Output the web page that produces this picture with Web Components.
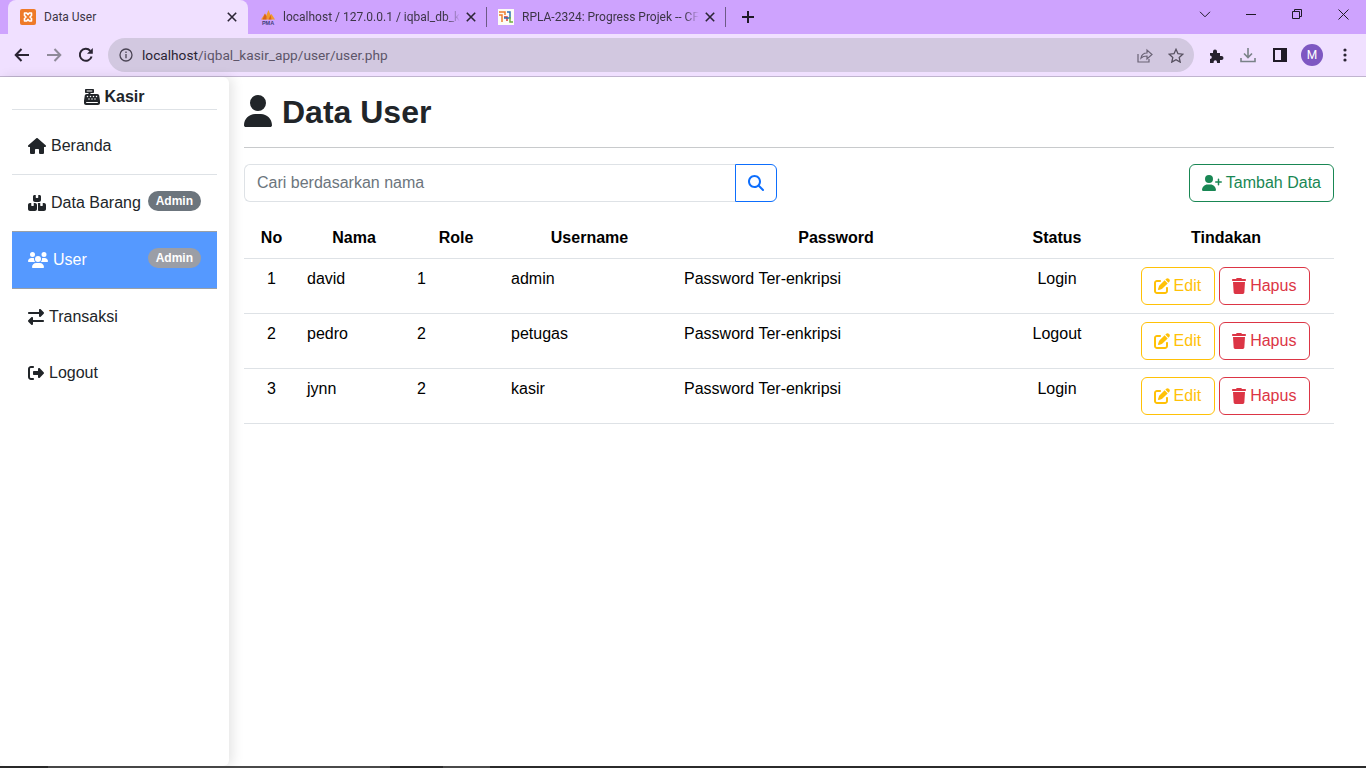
<!DOCTYPE html>
<html lang="id">
<head>
<meta charset="utf-8">
<title>Data User</title>
<style>
  html, body { margin: 0; height: 768px; overflow: hidden; background: #fff; }
  body { display: flex; flex-direction: column; font-family: "Liberation Sans", Arial, sans-serif; font-size: 16px; color: #212529; }
</style>
</head>
<body>
  <browser-chrome url-host="localhost" url-path="/iqbal_kasir_app/user/user.php"></browser-chrome>
  <app-shell>
    <app-sidebar slot="side">
      <side-link icon="home" vb="576" style="margin-top:7px">Beranda</side-link>
      <side-rule></side-rule>
      <side-link icon="boxes" vb="576" badge="Admin" style="height:56px">Data Barang</side-link>
      <side-link icon="users" vb="640" badge="Admin" active>User</side-link>
      <side-link icon="exchange" vb="512" style="padding-bottom:2px">Transaksi</side-link>
      <side-link icon="logout" vb="512" style="height:56px;padding-bottom:2px">Logout</side-link>
    </app-sidebar>
    <page-title>Data User</page-title>
    <tool-row></tool-row>
    <user-table></user-table>
  </app-shell>
  <task-strip></task-strip>

<script>
  // ---- font awesome style icon paths ----
  const ICONS = {
    home: "M575.8 255.5c0 18-15 32.100-32 32.100h-32l.7 160.200c0 2.700-.2 5.400-.5 8.100V472c0 22.100-17.900 40-40 40H456c-1.100 0-2.200 0-3.300-.1c-1.400 .1-2.800 .1-4.200 .1H416 392c-22.100 0-40-17.900-40-40V448 384c0-17.700-14.300-32-32-32H256c-17.700 0-32 14.300-32 32v64 24c0 22.100-17.900 40-40 40H160 128.100c-1.500 0-3-.1-4.500-.2c-1.200 .1-2.400 .2-3.600 .2H104c-22.100 0-40-17.900-40-40V360c0-.9 0-1.900 .1-2.800V287.600H32c-18 0-32-14-32-32.100c0-9 3-17 10-24L266.400 8c7-7 15-8 22-8s15 2 21 7L564.800 231.500c8 7 12 15 11 24z",
    boxes: "M248 0H208c-26.500 0-48 21.500-48 48V160c0 35.300 28.700 64 64 64H352c35.300 0 64-28.700 64-64V48c0-26.500-21.500-48-48-48H328V80c0 8.800-7.200 16-16 16H264c-8.800 0-16-7.200-16-16V0zM64 256c-35.300 0-64 28.700-64 64V448c0 35.300 28.700 64 64 64H224c35.300 0 64-28.700 64-64V320c0-35.300-28.700-64-64-64H184v80c0 8.800-7.200 16-16 16H120c-8.800 0-16-7.200-16-16V256H64zM352 512H512c35.300 0 64-28.700 64-64V320c0-35.300-28.700-64-64-64H472v80c0 8.800-7.200 16-16 16H408c-8.800 0-16-7.200-16-16V256H352c-15 0-28.800 5.100-39.700 13.800c4.900 10.400 7.700 22 7.700 34.200V464c0 12.200-2.800 23.800-7.700 34.200C323.200 506.900 337 512 352 512z",
    users: "M144 0a80 80 0 1 1 0 160A80 80 0 1 1 144 0zM512 0a80 80 0 1 1 0 160A80 80 0 1 1 512 0zM0 298.700C0 239.800 47.800 192 106.700 192h42.700c15.900 0 31 3.500 44.600 9.700c-1.300 7.200-1.900 14.700-1.900 22.300c0 38.200 16.800 72.500 43.300 96c-.2 0-.4 0-.7 0H21.300C9.600 320 0 310.400 0 298.700zM405.300 320c-.2 0-.4 0-.7 0c26.600-23.500 43.300-57.800 43.300-96c0-7.600-.7-15-1.900-22.300c13.600-6.300 28.700-9.700 44.600-9.700h42.700C592.200 192 640 239.800 640 298.700c0 11.800-9.600 21.300-21.300 21.300H405.300zM224 224a96 96 0 1 1 192 0 96 96 0 1 1 -192 0zM128 485.300C128 411.700 187.700 352 261.300 352H378.700C452.300 352 512 411.700 512 485.300c0 14.700-11.900 26.700-26.700 26.700H154.700c-14.700 0-26.700-11.900-26.700-26.700z",
    exchange: "M32 96l320 0V32c0-12.900 7.800-24.600 19.800-29.600s25.700-2.200 34.900 6.900l96 96c6 6 9.400 14.100 9.400 22.600s-3.400 16.600-9.400 22.600l-96 96c-9.200 9.200-22.900 11.900-34.900 6.900s-19.800-16.600-19.800-29.600V160L32 160c-17.700 0-32-14.300-32-32s14.300-32 32-32zM480 352c17.700 0 32 14.300 32 32s-14.300 32-32 32H160v64c0 12.900-7.800 24.600-19.800 29.600s-25.700 2.200-34.900-6.900l-96-96c-6-6-9.400-14.100-9.400-22.600s3.400-16.600 9.400-22.600l96-96c9.200-9.200 22.900-11.900 34.900-6.900s19.800 16.600 19.800 29.600l0 64H480z",
    logout: "M377.900 105.900L500.700 228.700c7.200 7.200 11.300 17.100 11.300 27.300s-4.100 20.100-11.300 27.300L377.900 406.100c-6.400 6.400-15 9.900-24 9.900c-18.700 0-33.900-15.200-33.900-33.900l0-62.100-128 0c-17.700 0-32-14.300-32-32l0-64c0-17.700 14.300-32 32-32l128 0 0-62.100c0-18.700 15.200-33.900 33.900-33.900c9 0 17.600 3.600 24 9.900zM160 96L96 96c-17.700 0-32 14.300-32 32l0 256c0 17.700 14.300 32 32 32l64 0c17.700 0 32 14.300 32 32s-14.300 32-32 32l-64 0c-53 0-96-43-96-96L0 128C0 75 43 32 96 32l64 0c17.700 0 32 14.300 32 32s-14.300 32-32 32z",
    register: "M64 0C46.300 0 32 14.300 32 32V96c0 17.700 14.300 32 32 32h80v32H87c-31.600 0-58.500 23.100-63.300 54.400L1.100 364.100C.4 368.800 0 373.600 0 378.400V448c0 35.300 28.700 64 64 64H448c35.300 0 64-28.700 64-64V378.400c0-4.800-.4-9.600-1.100-14.400L488.200 214.400C483.500 183.100 456.600 160 425 160H208V128h80c17.700 0 32-14.300 32-32V32c0-17.700-14.300-32-32-32H64zM96 48H256c8.800 0 16 7.200 16 16s-7.200 16-16 16H96c-8.800 0-16-7.200-16-16s7.200-16 16-16zM64 432c0-8.800 7.200-16 16-16H432c8.800 0 16 7.200 16 16s-7.200 16-16 16H80c-8.800 0-16-7.200-16-16zm48-168a24 24 0 1 1 0-48 24 24 0 1 1 0 48zm120-24a24 24 0 1 1 -48 0 24 24 0 1 1 48 0zM160 344a24 24 0 1 1 0-48 24 24 0 1 1 0 48zM328 240a24 24 0 1 1 -48 0 24 24 0 1 1 48 0zM256 344a24 24 0 1 1 0-48 24 24 0 1 1 0 48zM424 240a24 24 0 1 1 -48 0 24 24 0 1 1 48 0zM352 344a24 24 0 1 1 0-48 24 24 0 1 1 0 48z",
    user: "M224 256A128 128 0 1 0 224 0a128 128 0 1 0 0 256zm-45.700 48C79.800 304 0 383.800 0 482.300C0 498.700 13.300 512 29.700 512H418.300c16.400 0 29.700-13.300 29.700-29.700C448 383.800 368.200 304 269.700 304H178.300z",
    userplus: "M96 128a128 128 0 1 1 256 0A128 128 0 1 1 96 128zM0 482.300C0 383.800 79.800 304 178.300 304h91.400C368.200 304 448 383.800 448 482.300c0 16.400-13.300 29.700-29.700 29.700H29.700C13.300 512 0 498.700 0 482.300zM504 312V248H440c-13.300 0-24-10.700-24-24s10.700-24 24-24h64V136c0-13.300 10.700-24 24-24s24 10.700 24 24v64h64c13.300 0 24 10.700 24 24s-10.700 24-24 24H552v64c0 13.300-10.700 24-24 24s-24-10.700-24-24z",
    search: "M416 208c0 45.900-14.900 88.300-40 122.700L502.600 457.400c12.500 12.500 12.500 32.800 0 45.300s-32.800 12.500-45.300 0L330.700 376c-34.400 25.200-76.800 40-122.700 40C93.100 416 0 322.900 0 208S93.100 0 208 0S416 93.100 416 208zM208 352a144 144 0 1 0 0-288 144 144 0 1 0 0 288z",
    trash: "M135.200 17.700L128 32H32C14.300 32 0 46.300 0 64S14.300 96 32 96H416c17.700 0 32-14.300 32-32s-14.300-32-32-32H320l-7.200-14.300C307.400 6.800 296.300 0 284.200 0H163.800c-12.100 0-23.200 6.800-28.600 17.700zM416 128H32L53.200 467c1.600 25.300 22.600 45 47.900 45H346.900c25.300 0 46.300-19.700 47.900-45L416 128z",
    edit: "M471.600 21.700c-21.900-21.900-57.300-21.900-79.200 0L362.300 51.700l97.900 97.900 30.100-30.100c21.900-21.900 21.900-57.300 0-79.200L471.600 21.700zm-299.200 220c-6.100 6.100-10.800 13.600-13.500 21.900l-29.600 88.800c-2.900 8.600-.6 18.100 5.800 24.600s15.900 8.700 24.600 5.800l88.800-29.600c8.200-2.700 15.700-7.400 21.900-13.500L437.700 172.300 339.700 74.300 172.400 241.700zM96 64C43 64 0 107 0 160V416c0 53 43 96 96 96H352c53 0 96-43 96-96V320c0-17.700-14.300-32-32-32s-32 14.300-32 32v96c0 17.700-14.300 32-32 32H96c-17.700 0-32-14.300-32-32V160c0-17.700 14.300-32 32-32h96c17.700 0 32-14.300 32-32s-14.300-32-32-32H96z"
  };
  const fa = (name, w, h, vb = 512) => `<svg width="${w}" height="${h}" viewBox="0 0 ${vb} 512" fill="currentColor" style="display:block;flex:none"><path d="${ICONS[name]}"/></svg>`;

  class BrowserChrome extends HTMLElement {
    constructor() { super(); this.attachShadow({ mode: "open" }); }
    connectedCallback() {
      const host = this.getAttribute("url-host"), path = this.getAttribute("url-path");
      const closeX = `<svg class="x" width="10" height="10" viewBox="0 0 10 10" stroke="#2b2535" stroke-width="1.6" fill="none"><path d="M.8.8l8.4 8.4M9.2.8L.8 9.2"/></svg>`;
      this.shadowRoot.innerHTML = `
        <style>
          :host{display:block;flex:none;height:77px;font-family:Roboto,"Noto Sans",sans-serif;font-size:12px;color:#3c3546}
          .strip{height:34px;background:#cea3fe;display:flex;align-items:flex-start;padding-left:8px}
          .tab{height:34px;display:flex;align-items:center;flex:none;box-sizing:border-box}
          .tab.on{background:#f0e0ff;border-radius:8px 8px 0 0}
          .title{flex:none;white-space:nowrap;margin-left:8px;font-size:12px;-webkit-mask-image:linear-gradient(90deg,#000 92%,transparent)}
          .tab.on .title{-webkit-mask-image:none}
          .x{flex:none;margin-left:auto}
          .sep{width:1px;height:20px;background:#6d5a86;flex:none;margin-top:7px}
          .plus{flex:none;margin:10px 0 0 15px}
          .win{margin-left:auto;display:flex;align-items:flex-start;height:34px}
          .win svg{display:block}
          .win span{width:46px;height:28px;display:flex;align-items:center;justify-content:center}
          .bar{height:42px;background:#f0e0ff;border-bottom:1px solid #c0b4cf;display:flex;align-items:center;padding-left:14px}
          .nav{width:32px;flex:none;display:flex}
          .omni{flex:none;width:1086px;height:34px;border-radius:17px;background:#d2c8e0;display:flex;align-items:center;box-sizing:border-box;padding-left:11px;font-size:13.7px;color:#5d5569}
          .omni b{font-weight:400;color:#2a2433}
          .omni .u{margin-left:9px;flex:1}
          .omni svg{display:block;flex:none}
          .tools{display:flex;align-items:center;flex:none}
          .tools span{display:flex;width:32px;justify-content:center;flex:none}
          .tools div{width:22px;height:22px;border-radius:50%;background:#7e57c2;color:#fff;font-size:12px;display:flex;align-items:center;justify-content:center}
        </style>
        <div class="strip">
          <div class="tab on" style="width:240px;padding:0 11px 0 12px">
            <svg width="16" height="16" viewBox="0 0 16 16" style="flex:none;display:block"><rect width="16" height="16" rx="2" fill="#ee7a28"/><path d="M4.500 4h2.200L8 5.600 9.300 4h2.200v2.500L10 8l1.500 1.500V12H9.300L8 10.400 6.700 12H4.500V9.500L6 8 4.500 6.500z" fill="none" stroke="#fff" stroke-width="1.600" stroke-linejoin="round"/></svg>
            <span class="title">Data User</span>${closeX}
          </div>
          <div class="tab" style="width:238px;padding:0 10px 0 12px">
            <svg width="16" height="16" viewBox="0 0 16 16" style="flex:none;display:block"><path d="M1 10.500L5 4.500l1 2.500 2.500-6 2 5 1-1 3.500 5.500z" fill="#f29a2e"/><path d="M5 4.500l1.500 3v3H2.500zM10.500 6l1 4.500H8.500z" fill="#d9641c"/><text x="8" y="15.500" font-family="Liberation Sans" font-size="5.500" font-weight="700" text-anchor="middle" fill="#3d3d7a">PMA</text></svg>
            <span class="title" style="margin-left:7px">localhost / 127.0.0.1 / iqbal_db_k</span>${closeX}
          </div>
          <div class="sep"></div>
          <div class="tab" style="width:238px;padding:0 10px 0 11px">
            <svg width="16" height="16" viewBox="0 0 16 16" style="flex:none;display:block"><rect width="16" height="16" fill="#fdfcf5"/><path d="M1 3h6v3M1 6h3v7" fill="none" stroke="#ee7f2e" stroke-width="1.500"/><path d="M6 8h3v4" fill="none" stroke="#d8342f" stroke-width="1.500"/><path d="M9 3h3v6H6" fill="none" stroke="#2f6fb4" stroke-width="1.500"/><path d="M12 8v5h3" fill="none" stroke="#6fae3e" stroke-width="1.500"/></svg>
            <span class="title">RPLA-2324: Progress Projek -- CF</span>${closeX}
          </div>
          <div class="sep"></div>
          <svg class="plus" width="14" height="14" viewBox="0 0 14 14" stroke="#1f1a26" stroke-width="2" fill="none"><path d="M7 1v12M1 7h12"/></svg>
          <div class="win">
            <span><svg width="12" height="7" viewBox="0 0 12 7" fill="none" stroke="#1f1a26"><path d="M1 .8l5 5 5-5"/></svg></span>
            <span><svg width="10" height="1" viewBox="0 0 10 1"><path d="M0 .5h10" stroke="#1f1a26"/></svg></span>
            <span><svg width="10" height="10" viewBox="0 0 10 10" fill="none" stroke="#1f1a26"><path d="M.5 2.500h7v7h-7zM2.500 2.500v-2h7v7h-2"/></svg></span>
            <span><svg width="11" height="11" viewBox="0 0 11 11" fill="none" stroke="#1f1a26"><path d="M.5.5l10 10M10.500.5l-10 10"/></svg></span>
          </div>
        </div>
        <div class="bar">
          <div class="nav"><svg width="16" height="14" viewBox="0 0 16 14" fill="none" stroke="#2a2433" stroke-width="2"><path d="M15 7H2M7.500 1L1.700 7l5.800 6"/></svg></div>
          <div class="nav"><svg width="16" height="14" viewBox="0 0 16 14" fill="none" stroke="#8f8a99" stroke-width="2"><path d="M1 7h13M8.500 1l5.800 6-5.800 6"/></svg></div>
          <div class="nav" style="width:30px"><svg width="16" height="16" viewBox="0 0 16 16" fill="none" stroke="#2a2433" stroke-width="2"><path d="M13.600 9.500A6 6 0 1 1 12.300 3.800"/><path d="M14.800 1v5.800H9z" fill="#2a2433" stroke="none"/></svg></div>
          <div class="omni">
            <svg width="14" height="14" viewBox="0 0 14 14" fill="none" stroke="#4a4454" stroke-width="1.300"><circle cx="7" cy="7" r="6"/><path d="M7 6v4.200M7 3.500v1.400"/></svg>
            <span class="u"><b>${host}</b>${path}</span>
            <svg width="16" height="15" viewBox="0 0 16 15" fill="none" stroke="#6a6375" stroke-width="1.200"><path d="M1 6v8h11v-3"/><path d="M4 10c.5-3 3-5 6-5V2l5 4.500-5 4.500V8c-2.500 0-4.500.5-6 2z"/></svg>
            <svg style="margin:0 10px 0 15px" width="16" height="15" viewBox="0 0 16 15" fill="none" stroke="#56505f" stroke-width="1.300"><path d="M8 1.300l2 4.400 4.800.5-3.600 3.200 1 4.700L8 11.700l-4.200 2.400 1-4.700L1.200 6.200 6 5.700z"/></svg>
          </div>
          <div class="tools" style="margin-left:6px">
            <span><svg width="15" height="15" viewBox="0 0 15 15" fill="#26212d"><path d="M1 5h3V3.500a2 2 0 0 1 4 0V5h3v3h1.500a2 2 0 0 1 0 4H11v3H8v-1a1.700 1.700 0 0 0-3.400 0v1H1v-4a1.800 1.800 0 0 0 0-3.600z"/></svg></span>
            <span><svg width="16" height="16" viewBox="0 0 16 16" fill="none" stroke="#7a8288" stroke-width="1.600"><path d="M8 1v9M4 6.500L8 10.500l4-4M1 11v3.500h14V11"/></svg></span>
            <span><svg width="14" height="14" viewBox="0 0 14 14"><path d="M0 0h14v14H0z" fill="#1f1a26"/><path d="M2 2h6v10H2z" fill="#f0e0ff"/></svg></span>
            <span><div>M</div></span>
            <span style="width:34px"><svg width="4" height="14" viewBox="0 0 4 14" fill="#2a2433"><circle cx="2" cy="2" r="1.600"/><circle cx="2" cy="7" r="1.600"/><circle cx="2" cy="12" r="1.600"/></svg></span>
          </div>
        </div>`;
    }
  }

  class AppShell extends HTMLElement {
    constructor() {
      super(); this.attachShadow({ mode: "open" });
      this.shadowRoot.innerHTML = `
        <style>
          :host{display:flex;flex:1;min-height:0;background:#fff}
          main{flex:1;min-width:0;padding:0 32px 0 15px}
        </style>
        <slot name="side"></slot>
        <main><slot></slot></main>`;
    }
  }

  class AppSidebar extends HTMLElement {
    constructor() {
      super(); this.attachShadow({ mode: "open" });
      this.shadowRoot.innerHTML = `
        <style>
          :host{display:block;flex:none;box-sizing:border-box;width:229px;padding:0 12px;background:#fff;border-radius:0 6px 6px 6px;box-shadow:4px 0 12px rgba(0,0,0,.1);position:relative}
          .head{height:33px;box-sizing:border-box;padding-top:8px;border-bottom:1px solid #dee2e6;display:flex;align-items:center;justify-content:center;gap:4px;font-weight:700;color:#212529}
        </style>
        <div class="head">${fa("register", 16, 16)}<span>Kasir</span></div>
        <slot></slot>`;
    }
  }

  class SideLink extends HTMLElement {
    constructor() { super(); this.attachShadow({ mode: "open" }); }
    connectedCallback() {
      const badge = this.getAttribute("badge");
      const vb = +this.getAttribute("vb");
      const w = Math.round(16 * vb / 512 * 100) / 100;
      this.shadowRoot.innerHTML = `
        <style>
          :host{display:flex;align-items:center;box-sizing:border-box;height:57px;padding:0 16px;color:#212529}
          :host([active]){height:58px;background:#5599ff;color:#fff;border-top:1px solid #9aa0a6;border-bottom:1px solid #9aa0a6}
          .ic{margin-right:5px}
          .b{margin:-4px 0 0 auto;background:#6c757d;color:#fff;font-size:12px;font-weight:700;line-height:12px;padding:4px 8px;border-radius:10px}
          :host([active]) .b{background:#9b9ea6}
        </style>
        <span class="ic">${fa(this.getAttribute("icon"), w, 16, vb)}</span>
        <span><slot></slot></span>
        ${badge ? `<span class="b">${badge}</span>` : ""}`;
    }
  }

  class SideRule extends HTMLElement {
    constructor() {
      super(); this.attachShadow({ mode: "open" });
      this.shadowRoot.innerHTML = `<style>:host{display:block;height:1px;background:#dee2e6}</style>`;
    }
  }

  class PageTitle extends HTMLElement {
    constructor() {
      super(); this.attachShadow({ mode: "open" });
      this.shadowRoot.innerHTML = `
        <style>
          :host{display:flex;align-items:center;gap:10px;box-sizing:border-box;height:71px;padding-bottom:2px;border-bottom:1px solid #c8cacc;font-size:32px;font-weight:700;color:#212529}
          span{margin-top:2px}
        </style>
        ${fa("user", 28, 32, 448)}<span><slot></slot></span>`;
    }
  }

  class ToolRow extends HTMLElement {
    constructor() {
      super(); this.attachShadow({ mode: "open" });
      this.shadowRoot.innerHTML = `
        <style>
          :host{display:flex;justify-content:space-between;margin-top:16px}
          form{display:flex;width:533px;margin:0}
          input{flex:1;min-width:0;height:38px;box-sizing:border-box;border:1px solid #dee2e6;border-right:0;border-radius:6px 0 0 6px;padding:0 12px;font:16px "Liberation Sans",Arial,sans-serif;color:#212529;outline:0;background:#fff}
          input::placeholder{color:#6c757d;opacity:1}
          .s{width:42px;height:38px;box-sizing:border-box;border:1px solid #0d6efd;border-radius:0 6px 6px 0;background:#fff;color:#0d6efd;display:flex;align-items:center;justify-content:center;padding:0}
          .add{height:38px;box-sizing:border-box;border:1px solid #198754;border-radius:6px;background:#fff;color:#198754;font:16px "Liberation Sans",Arial,sans-serif;display:flex;align-items:center;gap:4px;padding:0 12px}
        </style>
        <form onsubmit="return false">
          <input type="text" placeholder="Cari berdasarkan nama">
          <button class="s" type="button" aria-label="Cari">${fa("search", 16, 16)}</button>
        </form>
        <button class="add" type="button">${fa("userplus", 20, 16, 640)}<span>Tambah Data</span></button>`;
    }
  }

  class UserTable extends HTMLElement {
    constructor() {
      super(); this.attachShadow({ mode: "open" });
      const rows = [[1, "david", 1, "admin", "Login"], [2, "pedro", 2, "petugas", "Logout"], [3, "jynn", 2, "kasir", "Login"]];
      const widths = [55, 110, 94, 173, 320, 122, 216];
      this.shadowRoot.innerHTML = `
        <style>
          :host{display:block;margin-top:16px;color:#000}
          table{width:1090px;table-layout:fixed;border-collapse:collapse}
          th{padding:8px;line-height:24px;text-align:center;font-weight:700;border-bottom:1px solid #dee2e6}
          td{padding:8px;line-height:24px;vertical-align:top;border-bottom:1px solid #dee2e6;text-align:left}
          td.c{text-align:center}
          .acts{display:flex;justify-content:center;gap:4px;margin-left:-1px}
          .btn{height:38px;box-sizing:border-box;border:1px solid;border-radius:6px;background:#fff;font:16px "Liberation Sans",Arial,sans-serif;display:flex;align-items:center;gap:4px;padding:0 13px 0 12px}
          .edit{color:#ffc107;border-color:#ffc107}
          .del{color:#dc3545;border-color:#dc3545}
        </style>
        <table>
          <colgroup>${widths.map((w) => `<col style="width:${w}px">`).join("")}</colgroup>
          <thead><tr><th>No</th><th>Nama</th><th>Role</th><th>Username</th><th>Password</th><th>Status</th><th>Tindakan</th></tr></thead>
          <tbody>${rows.map((r) => `<tr>
            <td class="c">${r[0]}</td><td>${r[1]}</td><td>${r[2]}</td><td>${r[3]}</td><td>Password Ter-enkripsi</td><td class="c">${r[4]}</td>
            <td><div class="acts">
              <button class="btn edit" type="button">${fa("edit", 16, 16, 512)}<span>Edit</span></button>
              <button class="btn del" type="button">${fa("trash", 14, 16, 448)}<span>Hapus</span></button>
            </div></td></tr>`).join("")}</tbody>
        </table>`;
    }
  }

  class TaskStrip extends HTMLElement {
    constructor() {
      super(); this.attachShadow({ mode: "open" });
      this.shadowRoot.innerHTML = `
        <style>
          :host{display:flex;flex:none;height:2px;background:#2b2b2b}
          i{display:block;height:2px;background:#4a4a4a}
        </style>
        <i style="margin-left:48px;width:342px"></i><i style="margin-left:53px;width:47px"></i>`;
    }
  }

  customElements.define("browser-chrome", BrowserChrome);
  customElements.define("app-shell", AppShell);
  customElements.define("app-sidebar", AppSidebar);
  customElements.define("side-link", SideLink);
  customElements.define("side-rule", SideRule);
  customElements.define("page-title", PageTitle);
  customElements.define("tool-row", ToolRow);
  customElements.define("user-table", UserTable);
  customElements.define("task-strip", TaskStrip);
</script>
</body>
</html>
